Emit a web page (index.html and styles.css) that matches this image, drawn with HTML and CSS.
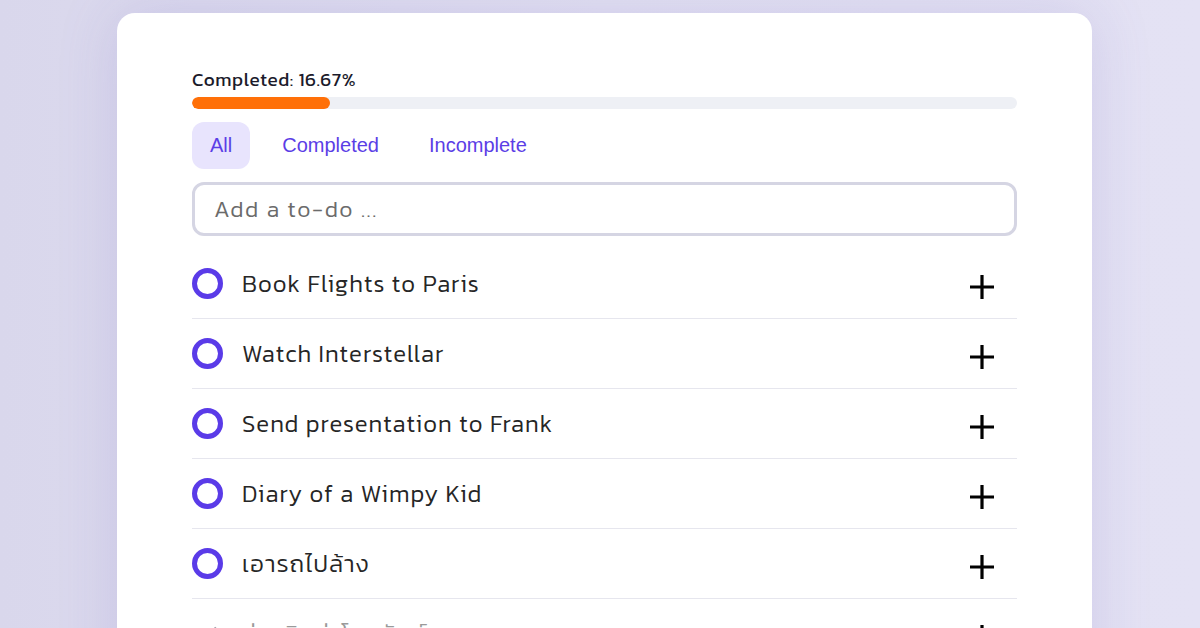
FILE: index.html
```html
<!DOCTYPE html>
<html lang="en">
<head>
<meta charset="utf-8">
<title>Todo</title>
<link rel="stylesheet" href="styles.css">
</head>
<body>
<main class="card">
  <div class="progress-label">Completed: 16.67%</div>
  <div class="progress-track"><div class="progress-fill" style="width:16.67%"></div></div>
  <nav class="tabs">
    <button class="tab active">All</button>
    <button class="tab">Completed</button>
    <button class="tab">Incomplete</button>
  </nav>
  <div class="add-box"><span class="placeholder">Add a to-do ...</span></div>
  <ul class="list">
    <li class="item"><span class="circle"></span><span class="text">Book Flights to Paris</span><svg class="plus" viewBox="0 0 26 26"><path d="M13 1v24M1 13h24"/></svg></li>
    <li class="item"><span class="circle"></span><span class="text">Watch Interstellar</span><svg class="plus" viewBox="0 0 26 26"><path d="M13 1v24M1 13h24"/></svg></li>
    <li class="item"><span class="circle"></span><span class="text">Send presentation to Frank</span><svg class="plus" viewBox="0 0 26 26"><path d="M13 1v24M1 13h24"/></svg></li>
    <li class="item"><span class="circle"></span><span class="text">Diary of a Wimpy Kid</span><svg class="plus" viewBox="0 0 26 26"><path d="M13 1v24M1 13h24"/></svg></li>
    <li class="item"><span class="circle"></span><span class="text">เอารถไปล้าง</span><svg class="plus" viewBox="0 0 26 26"><path d="M13 1v24M1 13h24"/></svg></li>
    <li class="item done"><svg class="check" viewBox="0 0 32 32"><path d="M8 17l6 6 11-13"/></svg><span class="text">จ่ายบิลค่าโทรศัพท์</span><svg class="plus" viewBox="0 0 26 26"><path d="M13 1v24M1 13h24"/></svg></li>
  </ul>
</main>
</body>
</html>
```
FILE: styles.css
```css
* { box-sizing: border-box; }
html, body { margin: 0; height: 100%; overflow: hidden; }
body {
  background: linear-gradient(90deg, #d9d7ec 0%, #e2e0f2 50%, #e4e2f4 100%);
  font-family: "Kanit", "Noto Sans", "Noto Sans Thai", "DejaVu Sans", sans-serif;
  padding-top: 13px;
}
.card {
  width: 975px;
  margin: 0 auto 0 117px;
  background: #fff;
  border-radius: 18px;
  padding: 54px 75px 40px;
  min-height: 700px;
  box-shadow: 0 0 60px rgba(110, 100, 190, 0.18);
}
.progress-label {
  font-size: 19px;
  font-weight: 400;
  letter-spacing: 0.5px;
  color: #1b1b2b;
  line-height: 26px;
}
.progress-track {
  margin-top: 4px;
  height: 12px;
  border-radius: 6px;
  background: #eef0f5;
  overflow: hidden;
}
.progress-fill {
  height: 100%;
  background: #ff7008;
  border-radius: 6px;
}
.tabs {
  display: flex;
  gap: 14px;
  margin-top: 13px;
}
.tab {
  border: 0;
  background: transparent;
  font-family: "Liberation Sans", Arial, sans-serif;
  font-size: 20px;
  color: #5b3ee6;
  height: 47px;
  padding: 0 18px;
  border-radius: 12px;
}
.tab.active { background: #e8e4fd; }
.add-box {
  margin-top: 13px;
  height: 54px;
  border: 3px solid #d5d5e3;
  border-radius: 12px;
  display: flex;
  align-items: center;
  padding-left: 19px;
}
.placeholder {
  font-size: 23px;
  font-weight: 300;
  letter-spacing: 1.6px;
  color: #6b6b6b;
}
.list {
  list-style: none;
  margin: 13px 0 0;
  padding: 0;
}
.item {
  height: 70px;
  display: flex;
  align-items: center;
  border-bottom: 1px solid #e6e6ee;
}
.circle {
  width: 31px;
  height: 31px;
  border: 5px solid #5a3be8;
  border-radius: 50%;
  flex: none;
}
.check {
  width: 31px;
  height: 31px;
  flex: none;
  fill: none;
  stroke: #9a9aa4;
  stroke-width: 3;
}
.text {
  margin-left: 19px;
  font-size: 24px;
  font-weight: 300;
  letter-spacing: 1px;
  color: #262626;
  flex: 1;
}
.done .text { color: #9a9a9a; text-decoration: line-through; }
.plus {
  width: 26px;
  height: 26px;
  margin-right: 22px;
  margin-top: 6px;
  fill: none;
  stroke: #000;
  stroke-width: 3.2;
}
```
